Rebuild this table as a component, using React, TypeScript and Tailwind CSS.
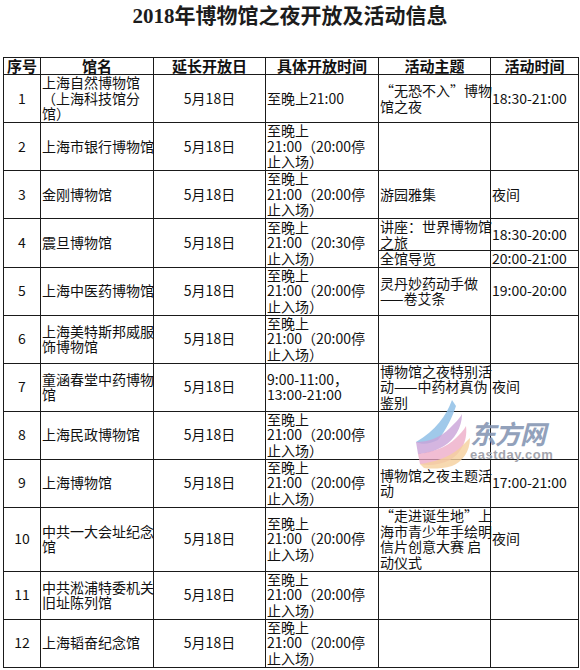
import React from "react";

type Row = {
  n: string;
  name: string[];
  time: string[];
  theme?: string[];
  at?: string[];
  tall?: boolean;
};

const std = ["至晚上", "21:00（20:00停", "止入场）"];

const rows: Row[] = [
  { n: "1", name: ["上海自然博物馆", "（上海科技馆分", "馆）"], time: ["至晚上21:00"], theme: ["“无恐不入”博物", "馆之夜"], at: ["18:30-21:00"] },
  { n: "2", name: ["上海市银行博物馆"], time: std },
  { n: "3", name: ["金刚博物馆"], time: std, theme: ["游园雅集"], at: ["夜间"] },
  { n: "4", name: ["震旦博物馆"], time: ["至晚上", "21:00（20:30停", "止入场）"] },
  { n: "5", name: ["上海中医药博物馆"], time: std, theme: ["灵丹妙药动手做", "——卷艾条"], at: ["19:00-20:00"] },
  { n: "6", name: ["上海美特斯邦威服", "饰博物馆"], time: std },
  { n: "7", name: ["童涵春堂中药博物", "馆"], time: ["9:00-11:00，", "13:00-21:00"], theme: ["博物馆之夜特别活", "动——中药材真伪", "鉴别"], at: ["夜间"] },
  { n: "8", name: ["上海民政博物馆"], time: std },
  { n: "9", name: ["上海博物馆"], time: std, theme: ["博物馆之夜主题活", "动"], at: ["17:00-21:00"] },
  { n: "10", name: ["中共一大会址纪念", "馆"], time: std, theme: ["“走进诞生地”上", "海市青少年手绘明", "信片创意大赛 启", "动仪式"], at: ["夜间"], tall: true },
  { n: "11", name: ["中共淞浦特委机关", "旧址陈列馆"], time: std },
  { n: "12", name: ["上海韬奋纪念馆"], time: std },
];

const cell = "border border-[#1a1a1a] px-[1px] py-0 align-middle whitespace-nowrap overflow-visible";

function Lines({ items }: { items?: string[] }) {
  if (!items) return null;
  return (
    <>
      {items.map((t, i) => (
        <div key={i}>{t}</div>
      ))}
    </>
  );
}

function Watermark() {
  return (
    <div className="absolute left-[410px] top-[398px] w-[160px] h-[72px] pointer-events-none">
      <svg className="absolute left-0 top-0" width="64" height="72" viewBox="0 0 64 72">
        <path d="M42 2 C36 18 26 32 6 44 C12 47 20 46 28 42 C36 32 42 20 46 8 Z" fill="#8fc0e6" opacity="0.85" />
        <path d="M6 44 C18 44 30 40 40 30 C46 24 50 20 52 16 C52 30 44 42 34 48 C24 54 14 56 8 56 Z" fill="#c9a2d8" opacity="0.8" />
        <path d="M8 56 C22 54 36 50 46 40 C50 36 54 32 56 28 C58 44 50 56 40 62 C30 67 18 68 10 66 Z" fill="#eca7c4" opacity="0.75" />
        <path d="M10 66 C24 64 38 60 50 50 C54 46 58 42 60 40 C60 54 52 64 42 68 C32 71 20 71 14 70 Z" fill="#f5cf9c" opacity="0.8" />
      </svg>
      <div className="absolute left-[60px] top-[22px] text-[26px] leading-[26px] italic font-bold text-[#8797b4] opacity-90 font-['Noto_Sans_CJK_SC',sans-serif] tracking-[-1px]">
        东方网
      </div>
      <div className="absolute left-[60px] top-[50px] text-[13px] leading-[13px] font-bold text-[#a3a5ad] font-['Liberation_Sans',sans-serif] tracking-[0.5px]">
        eastday.com
      </div>
    </div>
  );
}

export default function App() {
  return (
    <div className="relative w-[580px] h-[670px] overflow-hidden bg-white text-[#111] font-['Noto_Sans_CJK_SC',sans-serif]">
      <div className="h-[57px] pt-[3px] text-center text-[21px] leading-[27px] font-semibold font-['Liberation_Serif','Noto_Sans_CJK_SC',serif] text-[#1c1c1c]">
        2018年博物馆之夜开放及活动信息
      </div>

      <table className="ml-[3px] w-[575px] table-fixed border-collapse border border-[#111] text-[14px] leading-[15.5px]">
        <colgroup>
          <col className="w-[37px]" />
          <col className="w-[113px]" />
          <col className="w-[112px]" />
          <col className="w-[113px]" />
          <col className="w-[112px]" />
          <col className="w-[88px]" />
        </colgroup>
        <thead>
          <tr className="h-[17px]">
            {["序号", "馆名", "延长开放日", "具体开放时间", "活动主题", "活动时间"].map((h) => (
              <th key={h} className={`${cell} text-center font-bold text-[15px] leading-[16px]`}>
                {h}
              </th>
            ))}
          </tr>
        </thead>
        <tbody>
          {rows.map((r) =>
            r.n === "4" ? (
              <React.Fragment key={r.n}>
                <tr className="h-[32px]">
                  <td rowSpan={2} className={`${cell} text-center`}>{r.n}</td>
                  <td rowSpan={2} className={`${cell} text-left`}><Lines items={r.name} /></td>
                  <td rowSpan={2} className={`${cell} text-center`}>5月18日</td>
                  <td rowSpan={2} className={`${cell} text-left`}><Lines items={r.time} /></td>
                  <td className={`${cell} text-left`}><Lines items={["讲座：世界博物馆", "之旅"]} /></td>
                  <td className={`${cell} text-left`}>18:30-20:00</td>
                </tr>
                <tr className="h-[16px]">
                  <td className={`${cell} text-left`}>全馆导览</td>
                  <td className={`${cell} text-left`}>20:00-21:00</td>
                </tr>
              </React.Fragment>
            ) : (
              <tr key={r.n} className={r.tall ? "h-[64px]" : "h-[48px]"}>
                <td className={`${cell} text-center`}>{r.n}</td>
                <td className={`${cell} text-left`}><Lines items={r.name} /></td>
                <td className={`${cell} text-center`}>5月18日</td>
                <td className={`${cell} text-left`}><Lines items={r.time} /></td>
                <td className={`${cell} text-left`}><Lines items={r.theme} /></td>
                <td className={`${cell} text-left`}><Lines items={r.at} /></td>
              </tr>
            )
          )}
        </tbody>
      </table>

      <Watermark />
    </div>
  );
}
